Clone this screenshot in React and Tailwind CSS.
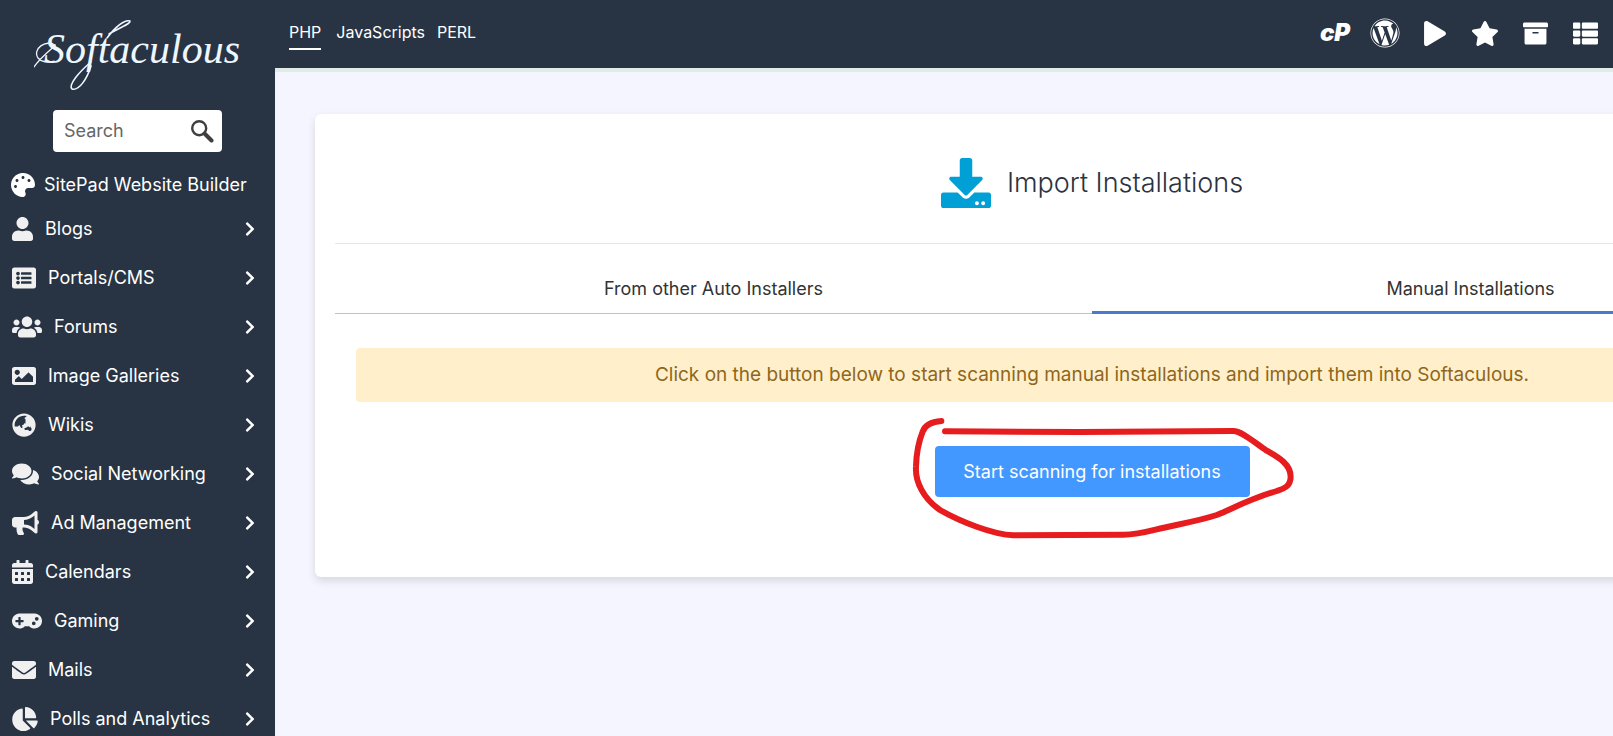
import { FaPalette, FaUser, FaListAlt, FaUsers, FaImage, FaGlobeAsia, FaComments, FaBullhorn, FaCalendarAlt, FaGamepad, FaEnvelope, FaChartPie, FaChevronRight, FaWordpress, FaPlay, FaStar, FaArchive, FaThList, FaDownload } from "react-icons/fa";

const categories = [
  ["Blogs", FaUser, "w-[21px]"],
  ["Portals/CMS", FaListAlt, "w-6"],
  ["Forums", FaUsers, "w-[30px]"],
  ["Image Galleries", FaImage, "w-6"],
  ["Wikis", FaGlobeAsia, "w-6"],
  ["Social Networking", FaComments, "w-[27px]"],
  ["Ad Management", FaBullhorn, "w-[27px]"],
  ["Calendars", FaCalendarAlt, "w-[21px]"],
  ["Gaming", FaGamepad, "w-[30px]"],
  ["Mails", FaEnvelope, "w-6"],
  ["Polls and Analytics", FaChartPie, "w-[26px]"],
];

const shortcuts = [
  ["WordPress", FaWordpress, "size-[30px]"],
  ["Demos", FaPlay, "h-[25px] w-[22px]"],
  ["Ratings", FaStar, "h-[25px] w-[28px]"],
  ["Backups", FaArchive, "size-[25px]"],
  ["Installations", FaThList, "size-[25px]"],
];

function Logo() {
  return (
    <a href="#" className="relative mx-auto block h-[110px] w-[207px] pt-[23px] pl-[10px] font-['Liberation_Serif',serif] text-[42px] leading-[52px] whitespace-nowrap text-[#eef6ff] italic">
      Softaculous
      <svg viewBox="0 0 207 110" className="pointer-events-none absolute inset-0 h-[110px] w-[207px]" fill="none" stroke="currentColor" strokeLinecap="round" aria-hidden="true">
        <path strokeWidth="1.3" d="M0 67 C7 56 24 44 21 45 C12 39 -2 49 4 58 C7 62 14 63 20 61" />
        <path strokeWidth="1.6" d="M57 66 C53 79 45 91 38 89 C34 85 45 72 57 62" />
        <path strokeWidth="1.6" d="M75 34 C86 27 97 24 96 21 C91 19 81 27 73 38" />
      </svg>
    </a>
  );
}

function Sidebar() {
  return (
    <aside className="w-[275px] shrink-0 bg-[#283443] text-white">
      <Logo />
      <div className="mx-auto flex h-[42px] w-[169px] items-center rounded bg-white pr-2 pl-[11px]">
        <input type="text" aria-label="Search" placeholder="Search" className="w-full min-w-0 text-gray-700 outline-none placeholder:text-[#666]" />
        <button type="button" aria-label="Run search" className="shrink-0">
          <svg viewBox="0 0 24 24" className="size-6" fill="none" stroke="#3f3f3f">
            <circle cx="9.2" cy="9.2" r="7" strokeWidth="2.4" />
            <path d="M14.5 14.5 L21.5 21.5" strokeWidth="4" strokeLinecap="round" />
          </svg>
        </button>
      </div>
      <nav className="pt-[14px]">
        <a href="#" className="flex h-[38px] items-center gap-[9px] pl-[11px]">
          <FaPalette className="size-6 shrink-0" />
          <span>SitePad Website Builder</span>
        </a>
        {categories.map(([label, Icon, width]) => (
          <a key={label} href="#" className="flex h-[49px] items-center gap-3 pr-5 pl-3">
            <Icon className={`h-6 shrink-0 text-[#f0f0f0] ${width}`} />
            <span className="grow">{label}</span>
            <FaChevronRight className="h-4 w-[10px]" />
          </a>
        ))}
      </nav>
    </aside>
  );
}

function TopBar() {
  return (
    <header className="flex h-[72px] items-center justify-between border-b-4 border-[#e0ece6] bg-[#283443] pr-[3px] pb-[2px] pl-[14px] text-white">
      <nav className="flex items-start gap-3 pt-1 text-base">
        <a href="#" className="mr-[3px] border-b-2 border-white pb-1">PHP</a>
        <a href="#">JavaScripts</a>
        <a href="#">PERL</a>
      </nav>
      <div className="flex items-center">
        <a href="#" aria-label="cPanel" className="flex w-[50px] justify-center text-2xl font-black italic">cP</a>
        {shortcuts.map(([label, Icon, size]) => (
          <a key={label} href="#" aria-label={label} className="flex w-[50px] justify-center">
            <Icon className={size} />
          </a>
        ))}
      </div>
    </header>
  );
}

function ImportCard() {
  return (
    <section className="min-w-[1554px] rounded-md bg-white px-5 pb-20 shadow-[0_4px_8px_rgba(0,0,0,0.12)]">
      <div className="flex h-[130px] items-center justify-center gap-4 border-b border-[#e6e7ea] pt-2">
        <FaDownload className="size-[50px] text-[#00a0d6]" />
        <h1 className="text-[27px] font-light text-[#2b3240]">Import Installations</h1>
      </div>
      <div role="tablist" className="grid grid-cols-2 pt-[22px] text-[#333]">
        <button type="button" role="tab" aria-selected="false" className="h-12 border-b border-[#bfc1c6] pb-[2px]">From other Auto Installers</button>
        <button type="button" role="tab" aria-selected="true" className="h-12 border-b-3 border-[#4a7bcb]">Manual Installations</button>
      </div>
      <div className="px-[21px] pt-[34px] text-center">
        <p className="flex h-[54px] items-center justify-center rounded bg-[#fff0cb] text-[19px] text-[#90661c]">
          Click on the button below to start scanning manual installations and import them into Softaculous.
        </p>
        <div className="relative mx-auto mt-11 w-[315px]">
          <button type="button" className="h-[51px] w-full rounded bg-[#4398ff] text-white">Start scanning for installations</button>
          <svg viewBox="0 0 1320 600" className="pointer-events-none absolute -top-[46px] -left-[55px] h-[200px] w-[440px] max-w-none" fill="none" stroke="#e61c1e" strokeWidth="18" strokeLinecap="round" strokeLinejoin="round" aria-hidden="true">
            <path d="M195 94 L600 96 L1060 93 C1085 93 1120 125 1160 152 C1200 174 1232 195 1232 230 C1232 262 1205 268 1190 273 C1100 300 1050 330 1010 345 C950 365 880 375 830 388 C790 398 760 404 730 404 L400 406 C340 404 240 365 180 330 C130 295 105 245 108 200 C109 160 118 120 128 95 C135 75 155 65 184 63" />
          </svg>
        </div>
      </div>
    </section>
  );
}

export default function App() {
  return (
    <div className="flex h-screen overflow-hidden bg-[#f4f5ff] font-['Inter',sans-serif] text-lg leading-6">
      <Sidebar />
      <div className="min-w-0 grow">
        <TopBar />
        <main className="overflow-hidden px-10 pt-[42px] pb-10">
          <ImportCard />
        </main>
      </div>
    </div>
  );
}
